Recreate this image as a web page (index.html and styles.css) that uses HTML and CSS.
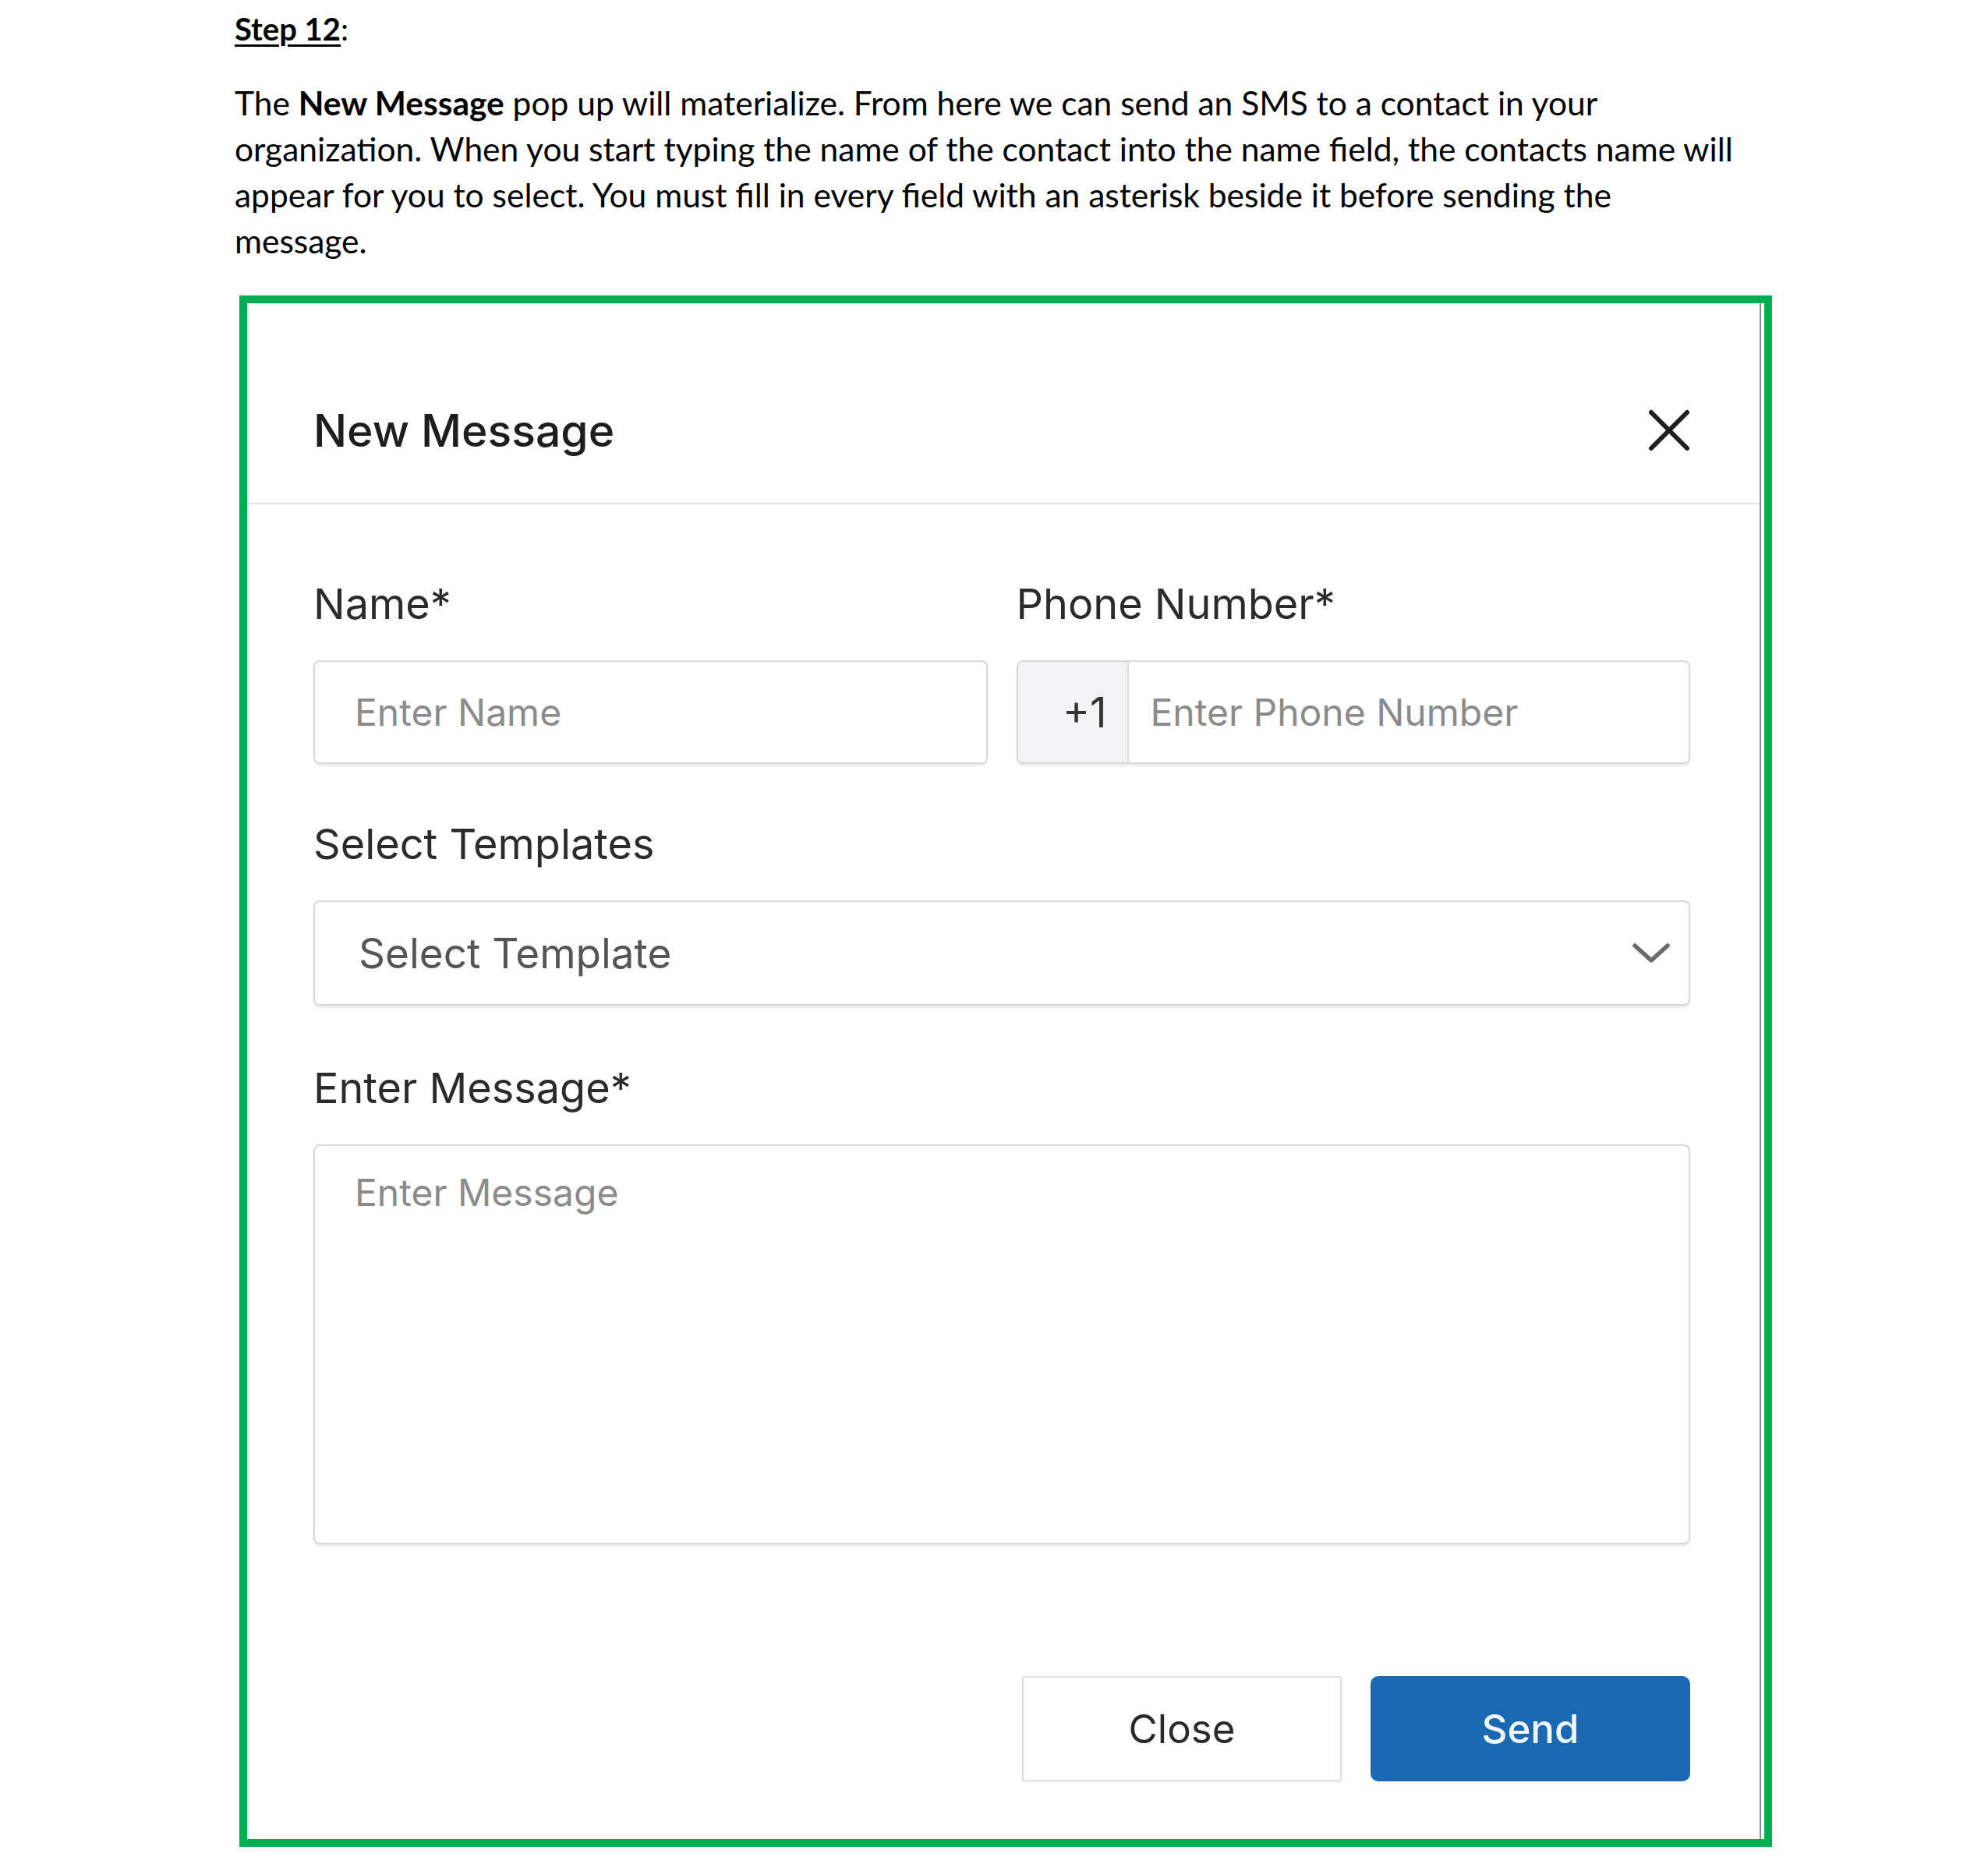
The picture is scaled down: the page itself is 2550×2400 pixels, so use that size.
FILE: index.html
```html
<!DOCTYPE html>
<html lang="en">
<head>
<meta charset="utf-8">
<title>Step 12 - New Message</title>
<link rel="stylesheet" href="styles.css">
</head>
<body>
<div class="doc">
  <p class="step"><span class="step-title">Step 12</span>:</p>
  <p class="intro">The <b>New Message</b> pop up will materialize. From here we can send an SMS to a contact in your<br>organization. When you start typing the name of the contact into the name field, the contacts name will<br>appear for you to select. You must fill in every field with an asterisk beside it before sending the<br>message.</p>

  <div class="frame">
    <div class="modal">
      <div class="modal-header">
        <h2 class="modal-title">New Message</h2>
        <span class="close-x" aria-label="Close">
          <svg viewBox="0 0 58 58" width="58" height="58"><path d="M6 6 L52 52 M52 6 L6 52" stroke="#1f1f1f" stroke-width="6" stroke-linecap="round" fill="none"/></svg>
        </span>
      </div>
      <div class="modal-body">
        <div class="row">
          <div class="field">
            <div class="label">Name*</div>
            <div class="input"><span class="ph">Enter Name</span></div>
          </div>
          <div class="field">
            <div class="label">Phone Number*</div>
            <div class="input phone"><span class="prefix">+1</span><span class="ph">Enter Phone Number</span></div>
          </div>
        </div>
        <div class="field gap-top gap-first">
          <div class="label">Select Templates</div>
          <div class="input select"><span class="sel">Select Template</span>
            <svg class="chev" viewBox="0 0 50 28" width="50" height="28"><path d="M4 4 L25 23 L46 4" stroke="#6b6b6b" stroke-width="5.5" stroke-linecap="round" stroke-linejoin="round" fill="none"/></svg>
          </div>
        </div>
        <div class="field gap-top">
          <div class="label">Enter Message*</div>
          <div class="input textarea"><span class="ph">Enter Message</span></div>
        </div>
        <div class="actions">
          <button class="btn btn-close">Close</button>
          <button class="btn btn-send">Send</button>
        </div>
      </div>
    </div>
  </div>
</div>
</body>
</html>
```

FILE: styles.css
```css
html, body {
  margin: 0;
  padding: 0;
  background: #ffffff;
}
.doc {
  padding-left: 301px;
  width: 1980px;
  font-family: "Lato", "Liberation Sans", sans-serif;
  color: #000;
}
.step {
  margin: 0;
  padding-top: 10px;
  font-size: 40px;
  line-height: 54px;
}
.step-title {
  font-weight: 700;
  text-decoration: underline;
  text-decoration-thickness: 3px;
  text-underline-offset: 5px;
}
.intro {
  margin: 38px 0 0 0;
  font-size: 42.5px;
  line-height: 59px;
  white-space: nowrap;
}
.intro b { font-weight: 700; }

.frame {
  margin-top: 41px;
  margin-left: 6px;
  width: 1946px;
  height: 1970px;
  border: 10px solid #00b050;
  display: flex;
}
.modal {
  flex: 1;
  margin-right: 4px;
  border-right: 2px solid #8c8c8c;
  background: #fff;
  display: flex;
  flex-direction: column;
  font-family: "Inter", "Open Sans", sans-serif;
}
.modal-header {
  height: 258px;
  box-sizing: border-box;
  border-bottom: 2px solid #e3e3e3;
  padding: 134px 87px 0 85px;
  display: flex;
  justify-content: space-between;
  align-items: flex-start;
}
.modal-title {
  margin: 0;
  font-size: 57px;
  line-height: 60px;
  font-weight: 500;
  color: #1e1e1e;
}
.close-x {
  display: block;
  width: 58px;
  height: 58px;
  margin-top: 0;
}
.close-x svg { display: block; }

.modal-body {
  padding: 98px 89px 0 85px;
  display: flex;
  flex-direction: column;
}
.row {
  display: flex;
  gap: 37px;
}
.row .field { flex: 1; }
.field {
  display: flex;
  flex-direction: column;
}
.gap-top { margin-top: 76px; }
.gap-first { margin-top: 73px; }
.label {
  font-size: 54px;
  line-height: 60px;
  color: #2b2b2b;
  margin-bottom: 42px;
}
.input {
  height: 133px;
  box-sizing: border-box;
  border: 2px solid #d8d8d8;
  border-radius: 8px;
  box-shadow: 0 3px 3px rgba(0,0,0,0.08);
  display: flex;
  align-items: center;
  padding-left: 51px;
  font-size: 48px;
}
.ph { color: #8b8b8b; }
.phone { padding-left: 0; overflow: hidden; }
.prefix {
  width: 142px;
  height: 100%;
  box-sizing: border-box;
  background: #f2f3f5;
  border-right: 2px solid #dcdcdc;
  display: flex;
  align-items: center;
  justify-content: flex-end;
  padding-right: 26px;
  color: #333;
  font-size: 53px;
  margin-right: 28px;
}
.select {
  height: 135px;
  padding-left: 56px;
  padding-right: 23px;
  justify-content: space-between;
}
.sel { color: #555; font-size: 53px; }
.chev { display: block; }
.textarea {
  height: 513px;
  align-items: flex-start;
  padding-top: 30px;
}
.actions {
  margin-top: 169px;
  display: flex;
  justify-content: flex-end;
  gap: 37px;
}
.btn {
  width: 410px;
  height: 135px;
  font-family: "Inter", "Open Sans", sans-serif;
  font-size: 51px;
  cursor: pointer;
}
.btn-close {
  background: #fff;
  color: #2a2a2a;
  border: 2px solid #e0e0e0;
  border-radius: 3px;
  box-shadow: 0 2px 3px rgba(0,0,0,0.06);
}
.btn-send {
  background: #1a68b2;
  color: #eef6ff;
  border: none;
  border-radius: 10px;
  font-weight: 500;
}
```
